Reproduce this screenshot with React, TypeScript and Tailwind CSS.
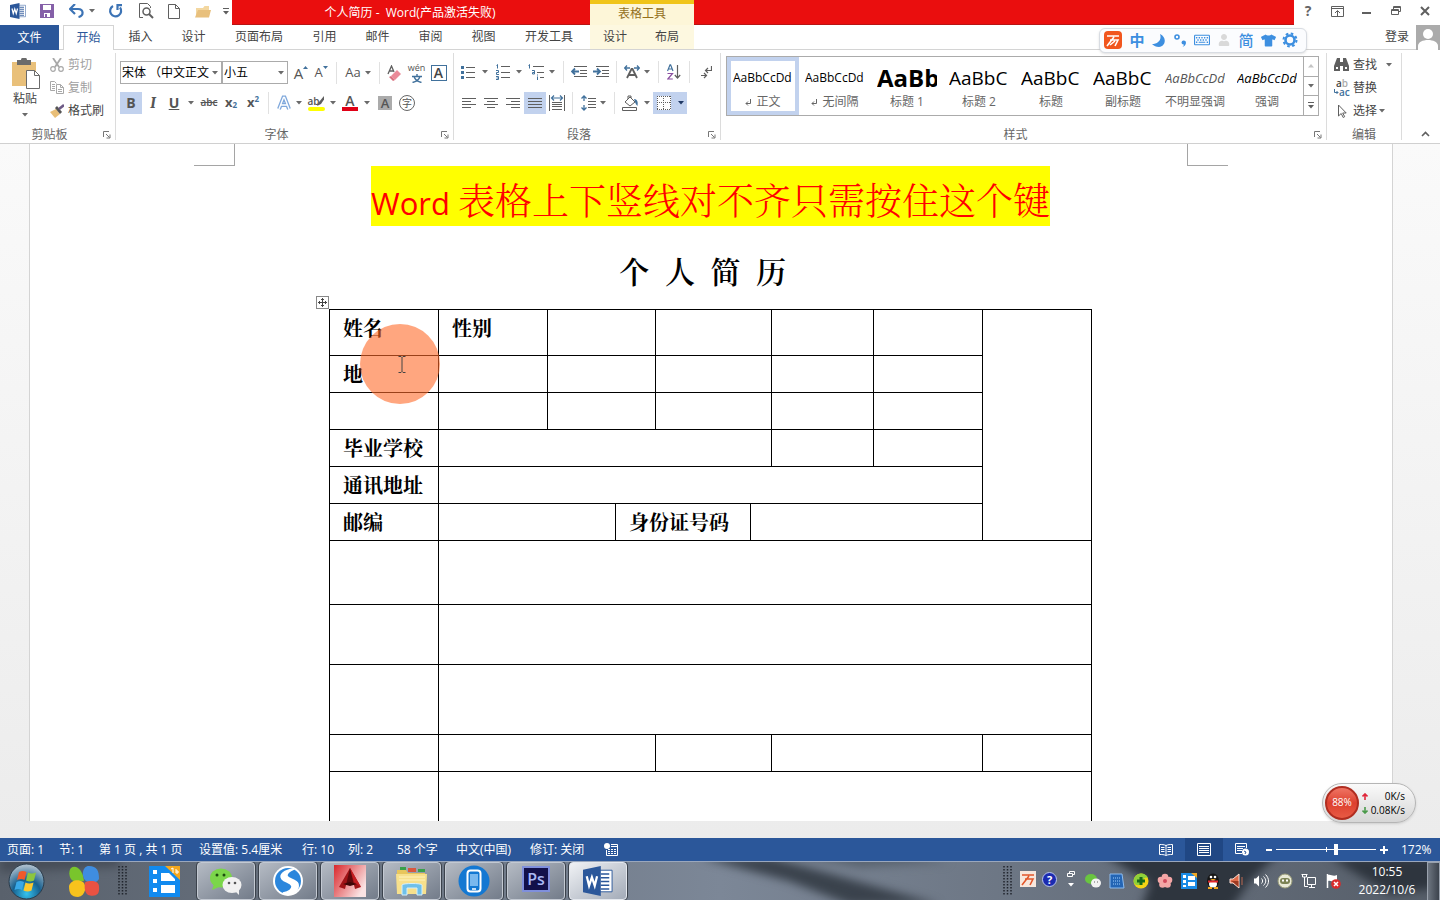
import React, { useState } from "react";
import { FaTshirt, FaUser, FaRegKeyboard } from "react-icons/fa";

type IconProps = {
  w: number;
  h: number;
  children: React.ReactNode;
  className?: string;
};

const BLUE = "#41719c";
const GRAY = "#5f5f5f";

function Icon({ w, h, children, className }: IconProps) {
  return (
    <svg
      width={w}
      height={h}
      viewBox={`0 0 ${w} ${h}`}
      fill="none"
      className={`shrink-0 ${className ?? ""}`}
      aria-hidden="true"
    >
      {children}
    </svg>
  );
}

function Arrow({ color = "#6a6a6a" }: { color?: string }) {
  return (
    <Icon w={6} h={4}>
      <path d="M0 0h6L3 3.6z" fill={color} />
    </Icon>
  );
}

// Кнопка ленты, ширина задаётся классом
function Tool({
  label,
  className,
  children,
}: {
  label: string;
  className: string;
  children: React.ReactNode;
}) {
  return (
    <button
      aria-label={label}
      className={`flex h-[22px] shrink-0 items-center justify-center ${className}`}
    >
      {children}
    </button>
  );
}

function Sep({ className }: { className: string }) {
  return <div className={`h-[22px] w-px shrink-0 bg-[#e1e1e1] ${className}`} />;
}

function Group({
  title,
  launcher = true,
  className,
  children,
}: {
  title: string;
  launcher?: boolean;
  className: string;
  children: React.ReactNode;
}) {
  return (
    <>
      <div className={`flex h-[93px] flex-col ${className}`}>
        {children}
        <div className="mt-auto flex h-4 items-center text-[#666]">
          <span className="flex-1 text-center">{title}</span>
          {launcher && (
            <button aria-label={`${title}设置`} className="w-4 pl-1">
              <Icon w={8} h={8}>
                <path d="M.5 6V.5H6M3 3l3.5 3.5M7 3.5V7H3.5" stroke="#777" />
              </Icon>
            </button>
          )}
        </div>
      </div>
      <div className="my-[3px] w-px shrink-0 bg-[#dcdcdc]" />
    </>
  );
}

function WordLogo({ size }: { size: number }) {
  return (
    <svg width={size} height={size} viewBox="0 0 32 32" aria-hidden="true">
      <path d="M17 4.500h14v23H17z" fill="#fff" stroke="#2b579a" />
      <path
        d="M19 8.500h9M19 12.500h9M19 16.500h9M19 20.500h9M19 24.500h9"
        stroke="#2b579a"
        strokeWidth="1.800"
      />
      <path d="M0 4L19 0v32L0 28z" fill="#2b579a" />
      <path
        d="M4 11l2.500 10L9.500 12l3 9L15 11"
        stroke="#fff"
        strokeWidth="2.400"
        fill="none"
      />
    </svg>
  );
}

/* ---------- Заголовок и вкладки ---------- */

function QuickAccess() {
  return (
    <div className="flex h-[25px] w-[232px] shrink-0 items-center bg-white pb-[3px] pl-[10px]">
      <WordLogo size={16} />
      <button aria-label="保存" className="ml-[14px]">
        <Icon w={14} h={14}>
          <path d="M0 0h14v14H0z" fill="#8560a8" />
          <path d="M3 1h8v5H3z" fill="#fff" />
          <path d="M4 9h6v4H7v-3H5v3H4z" fill="#fff" />
        </Icon>
      </button>
      <button aria-label="撤消" className="ml-[15px] flex items-center gap-[5px]">
        <Icon w={15} h={14}>
          <path d="M2 5h7c6 0 6 7 .5 8" stroke="#3c73b5" strokeWidth="2.200" />
          <path d="M6 0L1 5l5 5" stroke="#3c73b5" strokeWidth="2.200" />
        </Icon>
        <Arrow />
      </button>
      <button aria-label="重复" className="ml-[13px]">
        <Icon w={16} h={14}>
          <path d="M5 2A5.500 5.500 0 1 0 12 3.500" stroke="#3c73b5" strokeWidth="2.200" />
          <path d="M14 1.200H9.500V6" stroke="#3c73b5" strokeWidth="2.200" />
        </Icon>
      </button>
      <button aria-label="打印预览" className="ml-[15px]">
        <Icon w={15} h={16}>
          <path d="M4 14.500H.5v-14h8l3 3V5" stroke={GRAY} />
          <circle cx="7.500" cy="8.500" r="3.500" stroke={GRAY} strokeWidth="1.500" />
          <path d="M10 11l4 4" stroke={GRAY} strokeWidth="2" />
        </Icon>
      </button>
      <button aria-label="新建" className="ml-[14px]">
        <Icon w={12} h={15}>
          <path d="M.5.5h7l4 4v10H.5zM7.500.5v4h4" stroke={GRAY} />
        </Icon>
      </button>
      <button aria-label="打开" className="ml-[15px]">
        <Icon w={17} h={13}>
          <path d="M1 12V3h7l1.500-2H14v5H5z" fill="#f3d7a0" />
          <path d="M0 12.500L3 5h13l-2 7.500z" fill="#e8c07d" />
        </Icon>
      </button>
      <button aria-label="自定义" className="ml-[11px]">
        <Icon w={6} h={7}>
          <path d="M0 .5h6" stroke={GRAY} />
          <path d="M0 3h6L3 6.500z" fill={GRAY} />
        </Icon>
      </button>
    </div>
  );
}

function TitleBar() {
  return (
    <header className="flex h-[25px]">
      <QuickAccess />
      <div className="flex flex-1 border-b border-[#b81414] bg-[#ea0e0e]">
        <h1 className="w-[356px] text-center leading-[26px] text-white">
          个人简历 -&nbsp; Word(产品激活失败)
        </h1>
        <div className="-mb-px ml-0.5 w-[104px] border-t-4 border-[#f0c419] bg-[#fdf6d8] text-center leading-5 text-[#94701c]">
          表格工具
        </div>
      </div>
      <div className="flex w-[146px] shrink-0 items-center bg-white pb-[3px]">
        <button aria-label="帮助" className="w-7 text-sm font-bold text-[#666]">
          ?
        </button>
        <button aria-label="功能区显示选项" className="flex w-[31px] justify-center">
          <Icon w={13} h={11}>
            <path d="M.5.5h12v10H.5zM.5 2.500h12M6.500 10V5M4 7l2.500-2.500L9 7" stroke={GRAY} />
          </Icon>
        </button>
        <button aria-label="最小化" className="flex w-[27px] justify-center pt-1">
          <Icon w={9} h={2}>
            <path d="M0 1h9" stroke={GRAY} strokeWidth="2" />
          </Icon>
        </button>
        <button aria-label="还原" className="flex w-8 justify-center">
          <Icon w={10} h={10}>
            <path d="M2.500 3V.5h7v5H7M2.500 1.500h7" stroke={GRAY} />
            <path d="M.5 3.500h7v5h-7zM.5 4.500h7" stroke={GRAY} />
          </Icon>
        </button>
        <button aria-label="关闭" className="flex w-[26px] justify-center">
          <Icon w={10} h={10}>
            <path d="M1 1l8 8M9 1L1 9" stroke={GRAY} strokeWidth="2" />
          </Icon>
        </button>
      </div>
    </header>
  );
}

const TABS = [
  { name: "插入", wide: false },
  { name: "设计", wide: false },
  { name: "页面布局", wide: true },
  { name: "引用", wide: false },
  { name: "邮件", wide: false },
  { name: "审阅", wide: false },
  { name: "视图", wide: false },
  { name: "开发工具", wide: true },
];

function TabRow() {
  return (
    <nav className="flex h-[25px] border-b border-[#d4d4d4] bg-white leading-6 text-[#444]">
      <button className="-mb-px w-[59px] bg-[#2b579a] text-white">文件</button>
      <button className="-mb-px ml-1 w-[51px] border-x border-t border-[#d4d4d4] bg-white text-[#2b579a]">
        开始
      </button>
      {TABS.map((t) => (
        <button key={t.name} className={`${t.wide ? "w-[78px]" : "w-[53px]"}`}>
          {t.name}
        </button>
      ))}
      <div className="ml-0.5 flex w-[104px] bg-[#fdf8e0]">
        <button className="w-[50px]">设计</button>
        <button className="flex-1">布局</button>
      </div>
      <button className="ml-auto mr-[7px]">登录</button>
      <div className="-mb-px flex w-6 items-end justify-center bg-[#ababab]">
        <Icon w={20} h={23}>
          <circle cx="10" cy="7" r="5" fill="#fff" />
          <path d="M0 23v-4c0-8 20-8 20 0v4z" fill="#fff" />
        </Icon>
      </div>
    </nav>
  );
}

function ImeBar() {
  return (
    <div className="absolute right-[133px] top-[28px] z-10 flex h-[25px] w-[208px] items-center rounded-md border border-[#d8dce2] bg-[#fbfcfe] pb-px pl-1 text-[#3d8fe0] shadow-sm">
      <span className="flex size-[18px] items-center justify-center rounded-sm bg-[#f1561e]">
        <Icon w={14} h={13}>
          <path d="M1 2h12M4 6h8L9 12M8 3L1 12M9 7l-5 4" stroke="#fff" strokeWidth="1.600" />
        </Icon>
      </span>
      <span className="w-[26px] pl-1 text-center text-[15px] font-bold leading-5">中</span>
      <span className="flex w-5 justify-center">
        <Icon w={13} h={13}>
          <path d="M8 0c7 3 6 12-1 13-3 0-5-1-7-3 6 0 10-4 8-10z" fill="#3d8fe0" />
        </Icon>
      </span>
      <span className="flex w-6 justify-center">
        <Icon w={13} h={13}>
          <circle cx="3" cy="3" r="2" stroke="#3d8fe0" strokeWidth="1.600" />
          <path d="M7.500 8.500a2.200 2.200 0 1 1 4.500.5c-.3 2-1.400 3-3.500 4 1-1 1.400-1.500 1.200-2.500-1.200 0-2.200-.8-2.200-2z" fill="#3d8fe0" />
        </Icon>
      </span>
      <span className="flex w-5 justify-center">
        <FaRegKeyboard size={16} />
      </span>
      <span className="flex w-6 justify-center text-[#d9d9d9]">
        <FaUser size={12} />
      </span>
      <span className="w-5 text-center text-[15px] font-medium leading-5">简</span>
      <span className="flex w-6 justify-center">
        <FaTshirt size={15} />
      </span>
      <span className="flex w-5 justify-center">
        <Icon w={16} h={16}>
          <circle cx="8" cy="8" r="4.500" stroke="#3d8fe0" strokeWidth="2.600" />
          <circle cx="8" cy="8" r="6.500" stroke="#3d8fe0" strokeWidth="2" strokeDasharray="2.600 2.500" />
        </Icon>
      </span>
    </div>
  );
}

/* ---------- Лента ---------- */

function ClipboardGroup() {
  return (
    <Group title="剪贴板" className="w-[115px]">
      <div className="flex pt-[3px]">
        <button className="flex w-[50px] flex-col items-center pt-[5px] text-[#444]">
          <Icon w={29} h={31}>
            <path d="M1 4h24v24H1z" fill="#e9c07a" />
            <path d="M6 2h4a3 2.500 0 0 1 6 0h4v5H6z" fill="#6b6b6b" />
            <path d="M15.500 12.500h8l5 5v13h-13z" fill="#fff" stroke="#6b6b6b" />
            <path d="M23.500 12.500v5h5" stroke="#6b6b6b" />
          </Icon>
          <span className="leading-5">粘贴</span>
          <span className="pt-1">
            <Arrow />
          </span>
        </button>
        <div className="flex flex-col items-start">
          <button className="flex h-[23px] items-center gap-1 text-[#a0a0a0]">
            <Icon w={14} h={14}>
              <path d="M3 0l6 9M11 0L5 9" stroke="#a8a8a8" strokeWidth="1.800" />
              <circle cx="3" cy="11" r="2.300" stroke="#a8a8a8" strokeWidth="1.200" />
              <circle cx="11" cy="11" r="2.300" stroke="#a8a8a8" strokeWidth="1.200" />
            </Icon>
            剪切
          </button>
          <button className="flex h-[23px] items-center gap-1 text-[#a0a0a0]">
            <Icon w={14} h={13}>
              <path d="M5 9.500H.5v-9h4l2 2M2 3.500h3M2 5.500h3M2 7.500h3" stroke="#a8a8a8" />
              <path d="M6.500 3.500h4l3 3v6h-7zM10.500 3.500v3h3M8 8.500h4M8 10.500h4" stroke="#a8a8a8" />
            </Icon>
            复制
          </button>
          <button className="flex h-[23px] items-center gap-1 text-[#444]">
            <Icon w={14} h={14}>
              <path d="M0 8l6-3 4 5-5 4z" fill="#e9bf78" />
              <path d="M5 4l2-2 5 6-2 2z" fill="#555" />
              <path d="M9 5l5-4" stroke="#6d5a86" strokeWidth="2.600" />
            </Icon>
            格式刷
          </button>
        </div>
      </div>
    </Group>
  );
}

function Combo({
  label,
  value,
  className,
}: {
  label: string;
  value: string;
  className: string;
}) {
  return (
    <label className={`relative block h-[23px] shrink-0 ${className}`}>
      <select
        aria-label={label}
        className="h-full w-full appearance-none border border-[#ababab] bg-white pl-px text-black outline-none"
      >
        <option>{value}</option>
      </select>
      <span className="pointer-events-none absolute right-1 top-[10px]">
        <Arrow />
      </span>
    </label>
  );
}

function FontGroup() {
  return (
    <Group title="字体" className="w-[337px]">
      <div className="flex items-center pl-1 pt-[11px] text-[#555]">
        <Combo label="字体" value="宋体 （中文正文" className="w-[102px]" />
        <Combo label="字号" value="小五" className="w-[66px]" />
        <Tool label="增大字号" className="ml-1 w-[18px]">
          <span className="text-[15px]">A</span>
          <Icon w={5} h={16}>
            <path d="M0 4h5L2.500 1z" fill={BLUE} />
          </Icon>
        </Tool>
        <Tool label="减小字号" className="w-[22px]">
          <span className="text-[13px]">A</span>
          <Icon w={5} h={16}>
            <path d="M0 1h5L2.500 4z" fill={BLUE} />
          </Icon>
        </Tool>
        <Sep className="mx-1" />
        <Tool label="更改大小写" className="w-[34px] gap-1">
          <span className="text-[13px]">Aa</span>
          <Arrow />
        </Tool>
        <Sep className="mx-1" />
        <Tool label="清除格式" className="w-[21px]">
          <Icon w={15} h={16}>
            <path d="M1 9L4.500 1 7 7M2 6h4" stroke={GRAY} strokeWidth="1.300" />
            <path d="M4 11l6-6 4 4-6 6z" fill="#ea8a98" />
            <path d="M2 12l2-1 4 4-2 1z" fill="#d9707f" />
          </Icon>
        </Tool>
        <Tool label="拼音指南" className="w-[23px] flex-col">
          <span className="text-[9px] leading-3">wén</span>
          <Icon w={10} h={9}>
            <path
              d="M0 2.500h10M5 0v2.500M2 2.500c1 3 3 5 7.500 6M8 2.500c-1 3-3 5-7.500 6"
              stroke={BLUE}
              strokeWidth="1.400"
            />
          </Icon>
        </Tool>
        <Tool label="字符边框" className="w-[21px]">
          <span className="flex size-4 items-center justify-center border border-[#41719c] text-sm font-semibold text-[#444]">
            A
          </span>
        </Tool>
      </div>
      <div className="flex items-center pl-1 pt-2 text-[#555]">
        <Tool label="加粗" className="w-[22px] bg-[#c2d2ee] text-sm font-bold">
          B
        </Tool>
        <Tool label="倾斜" className="w-[22px] font-serif text-base font-bold italic">
          I
        </Tool>
        <Tool label="下划线" className="w-5 text-sm font-bold underline">
          U
        </Tool>
        <Tool label="下划线样式" className="w-[14px]">
          <Arrow />
        </Tool>
        <Tool label="删除线" className="w-[22px] text-[10px] font-semibold line-through">
          abc
        </Tool>
        <Tool label="下标" className="w-[22px] text-[13px] font-bold">
          x<sub className="text-[8px] text-[#41719c]">2</sub>
        </Tool>
        <Tool label="上标" className="w-[22px] text-[13px] font-bold">
          x<sup className="text-[8px] text-[#41719c]">2</sup>
        </Tool>
        <Sep className="mx-1" />
        <Tool label="文本效果" className="w-[22px]">
          <Icon w={16} h={16}>
            <path d="M3 14L7.500 2.500h1L13 14M5 10h6" stroke="#7fa8dc" strokeWidth="4" />
            <path d="M3 14L7.500 2.500h1L13 14M5 10h6" stroke="#fff" strokeWidth="1.400" />
          </Icon>
        </Tool>
        <Tool label="效果选项" className="w-2">
          <Arrow />
        </Tool>
        <Tool label="突出显示" className="w-[26px]">
          <span className="flex w-[17px] flex-col">
            <span className="flex h-3 items-center text-[10px] font-semibold leading-3">
              ab
              <Icon w={8} h={12} className="-ml-1">
                <path d="M8 1L3 7 1 11l4-2 4-6z" fill={GRAY} />
              </Icon>
            </span>
            <span className="h-1 rounded-full bg-[#ffff00]" />
          </span>
        </Tool>
        <Tool label="突出显示颜色" className="w-2">
          <Arrow />
        </Tool>
        <Tool label="字体颜色" className="w-[26px]">
          <span className="flex w-4 flex-col items-center">
            <span className="h-3 text-sm font-semibold leading-3">A</span>
            <span className="h-1 w-full bg-[#e00016]" />
          </span>
        </Tool>
        <Tool label="颜色选项" className="w-2">
          <Arrow />
        </Tool>
        <Tool label="字符底纹" className="w-7">
          <span className="size-[14px] bg-[#ababab] text-[13px] font-semibold leading-[14px]">
            A
          </span>
        </Tool>
        <Tool label="带圈字符" className="w-4">
          <span className="size-4 rounded-full border border-[#666] text-[10px] leading-[14px]">
            字
          </span>
        </Tool>
      </div>
    </Group>
  );
}

function ParagraphGroup() {
  return (
    <Group title="段落" className="w-[266px]">
      <div className="flex items-center pl-1 pt-[11px]">
        <Tool label="项目符号" className="w-5">
          <Icon w={14} h={14}>
            <path d="M5 2.500h9M5 7.500h9M5 12.500h9" stroke={GRAY} />
            <path d="M0 1h3v3H0zM0 6h3v3H0zM0 11h3v3H0z" fill={BLUE} />
          </Icon>
        </Tool>
        <Tool label="项目符号选项" className="w-[14px]">
          <Arrow />
        </Tool>
        <Tool label="编号" className="w-[22px]">
          <Icon w={14} h={16}>
            <path d="M5 2.500h9M5 8.500h9M5 13.500h9" stroke={GRAY} />
            <path
              d="M.5 1.500l1-1v4M0 6.500h2.500v2H.5v2h2.500M0 12.500h2.500v1.500H.5M2.500 13v2.500H0"
              stroke={BLUE}
            />
          </Icon>
        </Tool>
        <Tool label="编号选项" className="w-[10px]">
          <Arrow />
        </Tool>
        <Tool label="多级列表" className="w-6">
          <Icon w={17} h={16}>
            <path d="M5 2.500h11M9 8.500h7M12 13.500h4" stroke={GRAY} />
            <path d="M.5 1.500l1-1v4M4 6.500h2.500V10H4.500V8.500h2M9.500 10.500v1M9.500 12.500V16" stroke={BLUE} />
          </Icon>
        </Tool>
        <Tool label="列表选项" className="w-2">
          <Arrow />
        </Tool>
        <Sep className="mx-[7px]" />
        <Tool label="减少缩进" className="w-4">
          <Icon w={16} h={12}>
            <path d="M3 .5h13M9 4.500h7M9 7.500h7M3 10.500h13" stroke={GRAY} />
            <path d="M8 5.500H1M4 2.500l-3 3 3 3" stroke={BLUE} strokeWidth="1.800" />
          </Icon>
        </Tool>
        <Tool label="增加缩进" className="w-7">
          <Icon w={16} h={12}>
            <path d="M3 .5h13M9 4.500h7M9 7.500h7M3 10.500h13" stroke={GRAY} />
            <path d="M0 5.500h7M4 2.500l3 3-3 3" stroke={BLUE} strokeWidth="1.800" />
          </Icon>
        </Tool>
        <Sep className="ml-px mr-1" />
        <Tool label="中文版式" className="w-[22px]">
          <Icon w={16} h={14}>
            <path d="M3 13L7.500 4h1L13 13M5 10h6" stroke={GRAY} strokeWidth="1.800" />
            <path d="M6 3H1M3 .5L.7 3 3 5.500M10 3h5M13 .5L15.300 3 13 5.500" stroke={BLUE} strokeWidth="1.300" />
          </Icon>
        </Tool>
        <Tool label="版式选项" className="w-2">
          <Arrow />
        </Tool>
        <Sep className="ml-[7px] mr-1" />
        <Tool label="排序" className="w-[22px]">
          <Icon w={14} h={16}>
            <path d="M.5 7L3 .8h.6L6 7M1.500 5h4" stroke={BLUE} strokeWidth="1.200" />
            <path d="M.5 9.500h5L.8 15h5" stroke="#8a4fa0" strokeWidth="1.200" />
            <path d="M10.500 1v13M7.800 11l2.700 3 2.700-3" stroke={GRAY} strokeWidth="1.200" />
          </Icon>
        </Tool>
        <Sep className="mx-1" />
        <Tool label="显示编辑标记" className="w-6">
          <Icon w={11} h={13}>
            <path d="M10.500 0v4.500H5M7 2L4.500 4.500 7 7M0 9.500h5M3 7l2.500 2.500L3 12" stroke={GRAY} strokeWidth="1.200" />
          </Icon>
        </Tool>
      </div>
      <div className="flex items-center pl-1 pt-[9px]">
        <Tool label="左对齐" className="w-[21px]">
          <Icon w={14} h={12}>
            <path d="M0 1.500h14M0 4.500h9M0 7.500h14M0 10.500h9" stroke={GRAY} />
          </Icon>
        </Tool>
        <Tool label="居中" className="w-[23px]">
          <Icon w={14} h={12}>
            <path d="M0 1.500h14M3 4.500h8M0 7.500h14M3 10.500h8" stroke={GRAY} />
          </Icon>
        </Tool>
        <Tool label="右对齐" className="w-[22px]">
          <Icon w={14} h={12}>
            <path d="M0 1.500h14M5 4.500h9M0 7.500h14M5 10.500h9" stroke={GRAY} />
          </Icon>
        </Tool>
        <Tool label="两端对齐" className="w-[22px] bg-[#c2d2ee]">
          <Icon w={14} h={12}>
            <path d="M0 1.500h14M0 4.500h14M0 7.500h14M0 10.500h14" stroke={GRAY} />
          </Icon>
        </Tool>
        <Tool label="分散对齐" className="w-[22px]">
          <Icon w={16} h={16}>
            <path d="M.5 0v16M15.500 0v16M3 7.500h10M3 9.500h10M3 11.500h10M3 14.500h10" stroke={GRAY} />
            <path d="M3 3h10M5 .5L2.500 3 5 5.500M11 .5L13.500 3 11 5.500" stroke={BLUE} strokeWidth="1.200" />
          </Icon>
        </Tool>
        <Sep className="mx-1" />
        <Tool label="行距" className="w-[22px]">
          <Icon w={15} h={16}>
            <path d="M7 3.500h8M7 6.500h8M7 9.500h8M7 12.500h8" stroke={GRAY} />
            <path d="M3 1v5M3 10v5M.5 3.500L3 1l2.500 2.500M.5 12.500L3 15l2.500-2.500" stroke={BLUE} strokeWidth="1.300" />
          </Icon>
        </Tool>
        <Tool label="行距选项" className="w-2">
          <Arrow />
        </Tool>
        <Sep className="ml-[7px] mr-1" />
        <Tool label="底纹" className="w-[22px]">
          <Icon w={17} h={16}>
            <path d="M3 7l5-5 5 5-5 4zM6 4V1h3v2" stroke={GRAY} />
            <path d="M12 4c4 0 4 4 3.500 7-1.500-1-2-3-2.500-4z" fill={BLUE} />
            <path d="M.5 12.500h14v3H.5z" stroke={GRAY} />
          </Icon>
        </Tool>
        <Tool label="底纹选项" className="w-3">
          <Arrow />
        </Tool>
        <div className="flex bg-[#c2d2ee]">
          <Tool label="边框" className="w-[22px]">
            <Icon w={14} h={14}>
              <path d="M0 0h14v14H0z" fill="#fff" />
              <path
                d="M.5 0v14M13.500 0v14M6.500 0v14M0 .5h14M0 6.500h14M0 13.500h14"
                stroke={GRAY}
                strokeDasharray="1 1"
              />
            </Icon>
          </Tool>
          <Tool label="边框选项" className="w-3">
            <Arrow color="#1f3864" />
          </Tool>
        </div>
      </div>
    </Group>
  );
}

const STYLES = [
  { name: "正文", sample: "AaBbCcDd", look: "text-xs text-black", mark: true },
  { name: "无间隔", sample: "AaBbCcDd", look: "text-xs text-black", mark: true },
  { name: "标题 1", sample: "AaBb", look: "text-2xl font-bold text-black", mark: false },
  { name: "标题 2", sample: "AaBbC", look: "text-[19px] text-black", mark: false },
  { name: "标题", sample: "AaBbC", look: "text-[19px] text-black", mark: false },
  { name: "副标题", sample: "AaBbC", look: "text-[19px] text-black", mark: false },
  { name: "不明显强调", sample: "AaBbCcDd", look: "text-[13px] italic text-[#555]", mark: false },
  { name: "强调", sample: "AaBbCcDd", look: "text-[13px] italic text-black", mark: false },
];

function StylesGroup() {
  const [active, setActive] = useState<string>("正文");
  return (
    <Group title="样式" className="min-w-0 flex-1">
      <div className="ml-[5px] mr-[7px] mt-1.5 flex h-[60px] border border-[#ababab] bg-white">
        <div className="flex min-w-0 flex-1 overflow-hidden">
          {STYLES.map((s) => (
            <button
              key={s.name}
              onClick={() => setActive(s.name)}
              className={`flex w-[72px] shrink-0 flex-col items-center border-4 ${
                active === s.name ? "border-[#c2d2ee]" : "border-transparent"
              }`}
            >
              <span
                className={`h-[33px] w-[60px] overflow-hidden whitespace-nowrap text-left ${s.look} leading-[34px]`}
              >
                {s.sample}
              </span>
              <span className="flex h-[18px] items-center whitespace-nowrap text-[#666]">
                {s.mark && (
                  <Icon w={7} h={7} className="mr-1">
                    <path d="M5.500 0v4.500H1M3 2.500L1 4.500l2 2" stroke="#666" />
                  </Icon>
                )}
                {s.name}
              </span>
            </button>
          ))}
        </div>
        <div className="flex w-[15px] flex-col divide-y divide-[#ababab] border-l border-[#ababab]">
          <button aria-label="上一行" className="flex flex-1 items-center justify-center">
            <Icon w={6} h={4}>
              <path d="M0 3.600h6L3 0z" fill="#c4c4c4" />
            </Icon>
          </button>
          <button aria-label="下一行" className="flex flex-1 items-center justify-center">
            <Arrow />
          </button>
          <button aria-label="其他" className="flex flex-1 items-center justify-center">
            <Icon w={6} h={7}>
              <path d="M0 .5h6" stroke={GRAY} />
              <path d="M0 3h6L3 6.500z" fill={GRAY} />
            </Icon>
          </button>
        </div>
      </div>
    </Group>
  );
}

function EditGroup() {
  return (
    <Group title="编辑" launcher={false} className="w-[74px]">
      <div className="flex flex-col items-start pl-[7px] pt-[3px] text-[#444]">
        <button className="flex h-[23px] items-center">
          <Icon w={15} h={13}>
            <path d="M3 0h3v4h3V0h3l3 8v5H9V8H6v5H0V8z" fill={GRAY} />
            <path d="M2 9h2v2H2zM11 9h2v2h-2z" fill="#fff" />
          </Icon>
          <span className="ml-1">查找</span>
          <span className="ml-[9px]">
            <Arrow />
          </span>
        </button>
        <button className="flex h-[23px] items-center">
          <span className="flex w-4 flex-col text-[10px] font-semibold leading-[9px]">
            <span>
              a<span className="text-[#aaa]">b</span>
            </span>
            <span className="flex items-center text-[#41719c]">
              <Icon w={5} h={6}>
                <path d="M.5 0v3.500H4M2.500 2L4 3.500 2.500 5" stroke={BLUE} />
              </Icon>
              ac
            </span>
          </span>
          <span className="ml-[3px]">替换</span>
        </button>
        <button className="flex h-[23px] items-center">
          <Icon w={15} h={14}>
            <path d="M4.500 1v11l2.700-2.500 2 4 1.500-.8-2-3.700h3.500z" stroke={GRAY} />
          </Icon>
          <span className="ml-1">选择</span>
          <span className="ml-0.5">
            <Arrow />
          </span>
        </button>
      </div>
    </Group>
  );
}

function Ribbon() {
  return (
    <div className="flex border-b border-[#d0d0d0] bg-white">
      <ClipboardGroup />
      <FontGroup />
      <ParagraphGroup />
      <StylesGroup />
      <EditGroup />
      <div className="flex w-[38px] shrink-0 items-end justify-center pb-1.5 pl-2">
        <button aria-label="折叠功能区">
          <Icon w={9} h={6}>
            <path d="M1 5l3.500-3.500L8 5" stroke={GRAY} strokeWidth="1.600" />
          </Icon>
        </button>
      </div>
    </div>
  );
}

/* ---------- Документ ---------- */

type Cell = { text?: string; cols?: number; rows?: number };

const ROWS: { h: string; cells: Cell[] }[] = [
  {
    h: "h-[46px]",
    cells: [{ text: "姓名" }, { text: "性别" }, { cols: 2 }, { cols: 2 }, {}, {}, { rows: 6 }],
  },
  { h: "h-[37px]", cells: [{ text: "地" }, {}, { cols: 2 }, { cols: 2 }, {}, {}] },
  { h: "h-[37px]", cells: [{}, {}, { cols: 2 }, { cols: 2 }, {}, {}] },
  { h: "h-[37px]", cells: [{ text: "毕业学校" }, { cols: 5 }, {}, {}] },
  { h: "h-[37px]", cells: [{ text: "通讯地址" }, { cols: 7 }] },
  {
    h: "h-[37px]",
    cells: [{ text: "邮编" }, { cols: 2 }, { text: "身份证号码", cols: 2 }, { cols: 3 }],
  },
  { h: "h-[64px]", cells: [{}, { cols: 8 }] },
  { h: "h-[60px]", cells: [{}, { cols: 8 }] },
  { h: "h-[70px]", cells: [{}, { cols: 8 }] },
  { h: "h-[37px]", cells: [{}, { cols: 3 }, { cols: 2 }, { cols: 2 }, {}] },
  { h: "h-[64px]", cells: [{}, { cols: 8 }] },
];

function ResumeTable() {
  return (
    <table className="w-[763px] table-fixed border-collapse font-['Noto_Serif_CJK_SC','Noto_Sans_CJK_SC',serif] text-xl font-bold text-black">
      <colgroup>
        <col className="w-[109px]" />
        <col className="w-[109px]" />
        <col className="w-[68px]" />
        <col className="w-[40px]" />
        <col className="w-[95px]" />
        <col className="w-[21px]" />
        <col className="w-[102px]" />
        <col className="w-[109px]" />
        <col className="w-[109px]" />
      </colgroup>
      <tbody>
        {ROWS.map((row, i) => (
          <tr key={i} className={row.h}>
            {row.cells.map((c, j) => (
              <td
                key={j}
                colSpan={c.cols}
                rowSpan={c.rows}
                className="whitespace-nowrap border border-black py-0 pl-[13px] align-top leading-9"
              >
                {c.text}
              </td>
            ))}
          </tr>
        ))}
      </tbody>
    </table>
  );
}

function Document() {
  return (
    <main className="relative flex min-h-0 flex-1 bg-gradient-to-b from-[#fafafa] to-[#ececec] pb-[17px] pl-[29px] pr-[47px]">
      <div className="flex flex-1 flex-col items-center overflow-hidden border-x border-[#d4d4d4] bg-white pr-px">
        <div className="flex h-[22px] w-full max-w-[1034px] shrink-0 justify-between">
          <div className="w-[41px] border-b border-r border-[#a5a5a5]" />
          <div className="w-[41px] border-b border-l border-[#a5a5a5]" />
        </div>
        <p className="h-[60px] shrink-0 whitespace-nowrap bg-[#ffff00] pt-[9px] font-['Noto_Serif_CJK_SC','Noto_Sans_CJK_SC',serif] text-[37px] font-light leading-[48px] text-[#f00]">
          <span className="font-['Open_Sans',sans-serif] text-[31px] font-medium">Word </span>
          表格上下竖线对不齐只需按住这个键
        </p>
        <h2 className="mt-[22px] h-[61px] shrink-0 whitespace-pre font-['Open_Sans','Noto_Serif_CJK_SC','Noto_Sans_CJK_SC',serif] text-3xl font-semibold leading-[48px] text-black">
          {"个  人  简  历  "}
        </h2>
        <div className="relative">
          <button
            aria-label="移动表格"
            className="absolute -left-[13px] -top-[13px] flex size-[13px] items-center justify-center border border-[#888] bg-white"
          >
            <Icon w={9} h={9}>
              <path d="M4.500 0v9M0 4.500h9M3 1.500h3M3 7.500h3M1.500 3v3M7.500 3v3" stroke="#444" />
            </Icon>
          </button>
          <ResumeTable />
          {/* подсветка курсора */}
          <div className="absolute left-[31px] top-[15px] flex size-20 items-center justify-center rounded-full bg-[#ff6b2a]/60">
            <Icon w={8} h={17} className="ml-1">
              <path d="M.5.500h2.500L4 1.500l1-1h2.500M4 1.500v14M.5 16.500h2.500l1-1 1 1h2.500" stroke="#444" />
            </Icon>
          </div>
        </div>
      </div>
      <SpeedBall />
    </main>
  );
}

function SpeedBall() {
  return (
    <div className="absolute bottom-[15px] right-6 flex h-10 w-[94px] items-center rounded-full border border-[#b5b5b5] bg-gradient-to-b from-[#fafafa] to-[#d6d6d6] pl-0.5 shadow">
      <span className="flex size-[34px] shrink-0 items-center justify-center rounded-full border-2 border-[#b02d20] bg-gradient-to-b from-[#ef7464] via-[#dd3f2e] to-[#e85a44] text-[10px] text-white">
        88%
      </span>
      <div className="flex flex-1 flex-col pr-[10px] text-[10px] leading-[14px] text-black">
        <span className="flex items-center justify-between pl-[3px]">
          <Icon w={6} h={7}>
            <path d="M3 7V1.500M.5 3.500L3 1l2.500 2.500" stroke="#e0263a" strokeWidth="1.600" />
          </Icon>
          0K/s
        </span>
        <span className="flex items-center justify-between pl-[3px]">
          <Icon w={6} h={7}>
            <path d="M3 0v5.500M.5 3.500L3 6l2.500-2.500" stroke="#4a9a4a" strokeWidth="1.600" />
          </Icon>
          0.08K/s
        </span>
      </div>
    </div>
  );
}

/* ---------- Строка состояния ---------- */

const STATUS = [
  { text: "页面: 1", w: "w-[52px]" },
  { text: "节: 1", w: "w-[40px]" },
  { text: "第 1 页 , 共 1 页", w: "w-[100px]" },
  { text: "设置值: 5.4厘米", w: "w-[103px]" },
  { text: "行: 10", w: "w-[46px]" },
  { text: "列: 2", w: "w-[49px]" },
  { text: "58 个字", w: "w-[59px]" },
  { text: "中文(中国)", w: "w-[74px]" },
  { text: "修订: 关闭", w: "w-[74px]" },
];

function StatusBar() {
  const [zoom, setZoom] = useState<number>(60);
  return (
    <footer className="flex h-[23px] shrink-0 items-center bg-[#2b579a] pl-[7px] text-white">
      {STATUS.map((s) => (
        <span key={s.text} className={`shrink-0 whitespace-nowrap ${s.w}`}>
          {s.text}
        </span>
      ))}
      <Icon w={14} h={13}>
        <circle cx="3" cy="3" r="3" fill="#fff" />
        <path d="M7 1.500h6.500v11h-11V7M7 3.500h6" stroke="#fff" />
        <path d="M4 6.500h8M4 8.500h8M4 10.500h8" stroke="#fff" strokeDasharray="2 1" />
      </Icon>
      <button aria-label="阅读视图" className="ml-auto mr-3">
        <Icon w={14} h={12}>
          <path d="M7 1.500C5 .5 3 .5.5.5v10c2.500 0 4.500 0 6.500 1 2-1 4-1 6.500-1V.5C11 .5 9 .5 7 1.500zM7 1v10" stroke="#fff" />
          <path d="M2 3.500h3.500M2 5.500h3.500M2 7.500h3.500M8.500 3.500H12M8.500 5.500H12M8.500 7.500H12" stroke="#fff" />
        </Icon>
      </button>
      <button
        aria-label="页面视图"
        className="flex h-full w-[38px] items-center justify-center bg-[#204784]"
      >
        <Icon w={14} h={13}>
          <path d="M.5.5h13v12H.5zM2 3.500h10M2 5.500h10M2 7.500h10M2 9.500h10" stroke="#fff" />
        </Icon>
      </button>
      <button aria-label="Web 版式视图" className="ml-3 mr-[17px]">
        <Icon w={14} h={13}>
          <path d="M7 10.500H.5V.5h11V5M2 3.500h8M2 5.500h6M2 7.500h5" stroke="#fff" />
          <circle cx="10.500" cy="9" r="3.500" fill="#fff" />
          <path d="M9 8l2 1-1 2" stroke="#2b579a" />
        </Icon>
      </button>
      <button aria-label="缩小" className="mr-1">
        <Icon w={6} h={2}>
          <path d="M0 1h6" stroke="#fff" strokeWidth="2" />
        </Icon>
      </button>
      <div className="relative flex items-center">
        <input
          type="range"
          aria-label="缩放"
          min={0}
          max={100}
          value={zoom}
          onChange={(e) => setZoom(Number(e.target.value))}
          className="h-px w-[100px] appearance-none bg-white [&::-webkit-slider-thumb]:h-[11px] [&::-webkit-slider-thumb]:w-1 [&::-webkit-slider-thumb]:appearance-none [&::-webkit-slider-thumb]:bg-white"
        />
        <span className="pointer-events-none absolute left-[50px] h-[5px] w-px bg-white" />
      </div>
      <button aria-label="放大" className="ml-1">
        <Icon w={8} h={8}>
          <path d="M0 4h8M4 0v8" stroke="#fff" strokeWidth="2" />
        </Icon>
      </button>
      <span className="ml-[13px] w-[39px]">172%</span>
    </footer>
  );
}

/* ---------- Панель задач ---------- */

function Grip() {
  return (
    <Icon w={9} h={30}>
      <path
        d="M1 0v30M4.500 0v30M8 0v30"
        stroke="#20252d"
        strokeWidth="1.500"
        strokeDasharray="1.500 1.500"
      />
    </Icon>
  );
}

const TASKS = [
  {
    name: "微信",
    icon: (
      <Icon w={34} h={28}>
        <ellipse cx="12" cy="11" rx="11" ry="9.500" fill="#7bd64a" />
        <path d="M5 17l-2 6 7-3z" fill="#7bd64a" />
        <circle cx="8" cy="8" r="1.500" fill="#1d4d10" />
        <circle cx="15" cy="8" r="1.500" fill="#1d4d10" />
        <ellipse cx="23" cy="18" rx="9.500" ry="8" fill="#f1f1f1" />
        <path d="M26 24l4 4v-6z" fill="#f1f1f1" />
        <circle cx="20" cy="16" r="1.300" fill="#555" />
        <circle cx="26" cy="16" r="1.300" fill="#555" />
      </Icon>
    ),
  },
  {
    name: "搜狗",
    icon: (
      <Icon w={32} h={32}>
        <circle cx="16" cy="16" r="15" fill="#fff" />
        <circle cx="16" cy="16" r="13" fill="#2b86dc" />
        <path
          d="M22 4C12 5 7 10 10 14c3 3.500 9 3 10 7 .5 3-3 6-9 7l6 1c7-1 10-5 9-10-1.500-5-10-4.500-11-8-.5-3 2-5 7-7z"
          fill="#fff"
          stroke="#fff"
          strokeWidth="1.500"
        />
      </Icon>
    ),
  },
  {
    name: "CAD",
    icon: (
      <Icon w={32} h={32}>
        <defs>
          <linearGradient id="cad" x1="0" y1="0" x2="1" y2=".6">
            <stop offset="0" stopColor="#d9262b" />
            <stop offset="1" stopColor="#fbe3e3" />
          </linearGradient>
        </defs>
        <path d="M0 0h32v32H0z" fill="url(#cad)" />
        <path d="M16 3L5 22l6 2 1-4h8l1 4 6-2z" fill="#a01417" />
        <path d="M16 3l-4 17h8z" fill="#5d0a0c" />
        <path d="M9 19l7-2 7 2-7 2z" fill="#3d0707" />
        <path d="M16 3l4 14 7 5z" fill="#c41d21" />
      </Icon>
    ),
  },
  {
    name: "资源管理器",
    icon: (
      <Icon w={34} h={30}>
        <path d="M2 4h9l2 3h17v20H2z" fill="#e8c65c" />
        <path d="M5 1h6v3H5zM23 3h7v3h-7z" fill="#3aa04a" />
        <path d="M13 2h8v4h-8z" fill="#d9583f" />
        <path d="M1 8h31l-1 20H2z" fill="#f7e08c" />
        <path d="M4 11h26M4 14h26" stroke="#fff3bd" />
        <path d="M7 29V19c0-2 20-2 20 0v10h-5v-7H12v7z" fill="#6fc0ea" stroke="#d4effc" />
      </Icon>
    ),
  },
  {
    name: "手机助手",
    icon: (
      <Icon w={32} h={32}>
        <circle cx="16" cy="16" r="15.500" fill="#1478d2" />
        <rect x="9.500" y="5.500" width="13" height="21" rx="3" stroke="#fff" strokeWidth="2" />
        <path d="M12 9h8v12h-8z" fill="#7ab8ee" />
        <path d="M14 24h4" stroke="#fff" strokeWidth="1.500" />
      </Icon>
    ),
  },
  {
    name: "Photoshop",
    icon: (
      <span className="mb-1 flex h-[26px] w-7 items-center justify-center border-2 border-[#7f8fdc] bg-[#12104a] text-base font-semibold leading-5 text-[#a9b8f5]">
        Ps
      </span>
    ),
  },
  { name: "Word", icon: <WordLogo size={30} /> },
];

function Tray() {
  return (
    <div className="relative flex items-center">
      <Grip />
      <button aria-label="输入法" className="mb-1 ml-2 flex size-4 items-center justify-center bg-[#f7e6dc]">
        <Icon w={14} h={13}>
          <path d="M1 2h12M4 6h8L9 12M8 3L1 12" stroke="#e2562a" strokeWidth="1.600" />
        </Icon>
      </button>
      <button
        aria-label="帮助中心"
        className="mb-1 ml-1.5 size-[15px] rounded-full border border-[#b9c4ee] bg-[#1b2bb0] text-[11px] font-bold leading-[13px] text-white"
      >
        ?
      </button>
      <button aria-label="选项" className="mb-1 flex w-7 flex-col items-center gap-1.5">
        <Icon w={8} h={6}>
          <path d="M2.500 2V.5h5v3H6M.5 2.500h5v3h-5z" stroke="#fff" />
        </Icon>
        <Arrow color="#fff" />
      </button>
      <div className="flex items-center gap-2">
        <Icon w={16} h={16}>
          <ellipse cx="6" cy="6" rx="6" ry="5" fill="#69c540" />
          <ellipse cx="11" cy="10" rx="5" ry="4.500" fill="#f2f2f2" />
          <path d="M9 9h1M12 9h1" stroke="#666" />
        </Icon>
        <Icon w={16} h={16}>
          <path d="M1 1h12l2 14H1z" fill="#2465b4" stroke="#8cbcf0" />
          <path d="M4 5h7M4 8h8M4 11h8" stroke="#9fd0ff" strokeDasharray="1 1" />
        </Icon>
        <Icon w={16} h={16}>
          <circle cx="8" cy="8" r="7.500" fill="#f3d515" />
          <path d="M1 10c3 4 8 2 9-2s3-4 5-3c-1-3-4-4.500-7-4.500A7.500 7.500 0 0 0 1 10z" fill="#8ed13a" />
          <path d="M8 4v8M4 8h8" stroke="#17691a" strokeWidth="3" />
        </Icon>
        <Icon w={16} h={16}>
          <circle cx="8" cy="4" r="3.300" fill="#f4a6a6" />
          <circle cx="4" cy="7" r="3.300" fill="#f4a6a6" />
          <circle cx="12" cy="7" r="3.300" fill="#f4a6a6" />
          <circle cx="5.500" cy="11.500" r="3.300" fill="#f4a6a6" />
          <circle cx="10.500" cy="11.500" r="3.300" fill="#f4a6a6" />
          <circle cx="8" cy="8" r="2" fill="#d1495b" />
        </Icon>
        <Icon w={16} h={16}>
          <path d="M0 0h16v16H0z" fill="#1a8be6" />
          <path d="M2 2h3v3H2zM2 7h3v3H2zM2 12h3v2H2zM7 3h7v4H7zM7 9h7v4H7z" fill="#fff" />
          <path d="M10 0h6v5z" fill="#f0a927" />
        </Icon>
        <Icon w={16} h={16}>
          <ellipse cx="8" cy="8" rx="6" ry="7.500" fill="#161616" />
          <ellipse cx="8" cy="11" rx="4" ry="3.500" fill="#fff" />
          <circle cx="6" cy="4" r="1.300" fill="#fff" />
          <circle cx="10" cy="4" r="1.300" fill="#fff" />
          <path d="M5 6h6l-3 1.500z" fill="#f4a51c" />
          <path d="M3 8.500h10" stroke="#e0262c" strokeWidth="2" />
          <path d="M3 15h4M9 15h4" stroke="#f4a51c" strokeWidth="2" />
        </Icon>
        <Icon w={16} h={16}>
          <path d="M1 6h3l6-5v14l-6-5H1z" fill="#e06a48" stroke="#fbe0d6" />
          <path d="M2 8h7.500v6L4.500 9.500z" fill="#9c3a22" />
          <path d="M13 4v8" stroke="#8f5a4c" strokeWidth="1.500" />
        </Icon>
        <Icon w={16} h={16}>
          <path d="M1 5.500h2l3-3v11l-3-3H1z" fill="#fff" />
          <path d="M8.500 5.500c1.500 1.500 1.500 3.500 0 5M10.500 3.500c3 3 3 6 0 9M12.500 1.500c4 4 4 9 0 13" stroke="#fff" />
        </Icon>
        <Icon w={16} h={16}>
          <circle cx="8" cy="8" r="7" fill="#e9ead6" stroke="#9a9d79" />
          <rect x="3" y="5" width="10" height="6" rx="3" fill="#7c8354" />
          <path d="M5 7.500h2M9 7.500h2" stroke="#fff" strokeWidth="2" />
        </Icon>
        <Icon w={16} h={16}>
          <path d="M6.500 4.500h8v7h-8zM8 14.500h6M10.500 12v2" stroke="#fff" />
          <path d="M1.500 1v3h4V1M3.500 4v9.500H7M.5 1.500h6" stroke="#fff" />
        </Icon>
        <Icon w={16} h={16}>
          <path d="M2.500 1v14" stroke="#fff" strokeWidth="1.500" />
          <path d="M3 2c3-1 5 2 9 0v6c-4 2-6-1-9 0z" fill="#fff" />
          <circle cx="11" cy="11" r="4.800" fill="#d92b2b" />
          <path d="M9 9l4 4M13 9l-4 4" stroke="#fff" strokeWidth="1.500" />
        </Icon>
      </div>
      <time className="flex w-[86px] flex-col items-center pl-1.5 text-xs leading-[18px] text-white">
        <span>10:55</span>
        <span>2022/10/6</span>
      </time>
      <button
        aria-label="显示桌面"
        className="h-[39px] w-[13px] border border-[#9aa2ad] bg-gradient-to-r from-[#6e7681] to-[#3c434d]"
      />
    </div>
  );
}

function Taskbar() {
  return (
    <div className="relative flex h-[39px] shrink-0 items-center justify-between overflow-hidden border-t border-[#9aa7bd] bg-gradient-to-r from-[#59616c] via-[#7c8797] to-[#565e69]">
      {/* стеклянный фон с тёмными полосами */}
      <svg
        className="absolute inset-0 h-full w-full"
        viewBox="0 0 1440 39"
        preserveAspectRatio="none"
        aria-hidden="true"
      >
        <g className="blur-[5px]">
          <path d="M700 -5L770 -5 830 12 940 44H850L790 20z" fill="#3a424c" />
          <path d="M790 -8h110l50 8-90 6z" fill="#59636f" />
          <path d="M1100 -10h180l-30 30-20 30h-90l10-28z" fill="#2e353e" />
          <path d="M1330 -5h120v30l-60 8z" fill="#2e353e" />
          <path d="M0 -5h120v10L0 10z" fill="#444b55" />
        </g>
      </svg>
      <div className="relative flex items-center">
        <button aria-label="开始菜单" className="ml-2">
          <Icon w={37} h={37}>
            <defs>
              <radialGradient id="orb" cx=".5" cy=".85" r=".8">
                <stop offset="0" stopColor="#35c3ee" />
                <stop offset=".5" stopColor="#17608f" />
                <stop offset="1" stopColor="#a9bccb" />
              </radialGradient>
            </defs>
            <circle cx="18.500" cy="18.500" r="17.500" fill="url(#orb)" stroke="#2a3c4c" />
            <path d="M11 9c3-1.500 5-1 7.500 0l-2 8c-2-1-4.500-1.500-7.500 0z" fill="#f0592a" />
            <path d="M20 9.500c2 1 4.500 1.500 8 0l-2 8c-3 1.500-5.500 1-8 0z" fill="#8cc63f" />
            <path d="M8.500 19c3-1.500 5-1 7.500 0l-2 8c-2-1-4.500-1.500-7.500 0z" fill="#39a8e8" />
            <path d="M17.500 19.500c2 1 4.500 1.500 8 0l-2 8c-3 1.500-5.500 1-8 0z" fill="#fdc92d" />
          </Icon>
        </button>
        <button aria-label="浏览器" className="ml-6">
          <Icon w={31} h={31}>
            <path d="M15 15H5C0 14-1 5 2 2c5-4 12 2 13 13z" fill="#79c52c" />
            <path d="M17 15c-5-4-4-15 3-15 8 0 10 5 10 13-3 5-9 5-13 2z" fill="#3f8de0" />
            <path d="M14 16c4 3 3 14-5 15-7 0-9-4-9-11 2-6 9-7 14-4z" fill="#f8c21d" />
            <path d="M16 16.500c5-2.500 14-2 14 4 1 8-3 10-9 9-5-1-6-7-5-13z" fill="#ea5242" />
          </Icon>
        </button>
        <div className="ml-[18px]">
          <Grip />
        </div>
        <button aria-label="便签" className="ml-[22px]">
          <Icon w={31} h={31}>
            <path d="M0 0h31v31H0z" fill="#118aef" />
            <path
              d="M4 4h4v4H4zM4 13h4v4H4zM4 22h4v4H4zM12 7h8l6 6v2H12zM12 19h14v8H12z"
              fill="#fff"
            />
            <path d="M16 0h15v14z" fill="#f4a71e" />
            <path d="M22 3l2-1v5M27 3v4h2V5h-2" stroke="#fff" />
          </Icon>
        </button>
        <div className="ml-[17px] flex gap-1">
          {TASKS.map((t) => (
            <button
              key={t.name}
              aria-label={t.name}
              className={`flex h-[38px] w-[58px] items-center justify-center rounded-sm border shadow-[0_0_0_1px_#3b424c] ${
                t.name === "Word"
                  ? "border-[#e4e8ee] bg-gradient-to-br from-[#f0f2f5] to-[#a3abb8]"
                  : "border-[#c3c9d2] bg-gradient-to-br from-[#b5bbc4] to-[#737c8a]"
              }`}
            >
              {t.icon}
            </button>
          ))}
        </div>
      </div>
      <Tray />
    </div>
  );
}

export default function App() {
  return (
    <div className="relative flex h-screen flex-col overflow-hidden bg-white font-['Open_Sans','Noto_Sans_CJK_SC',sans-serif] text-xs">
      <TitleBar />
      <TabRow />
      <ImeBar />
      <Ribbon />
      <Document />
      <StatusBar />
      <Taskbar />
    </div>
  );
}
